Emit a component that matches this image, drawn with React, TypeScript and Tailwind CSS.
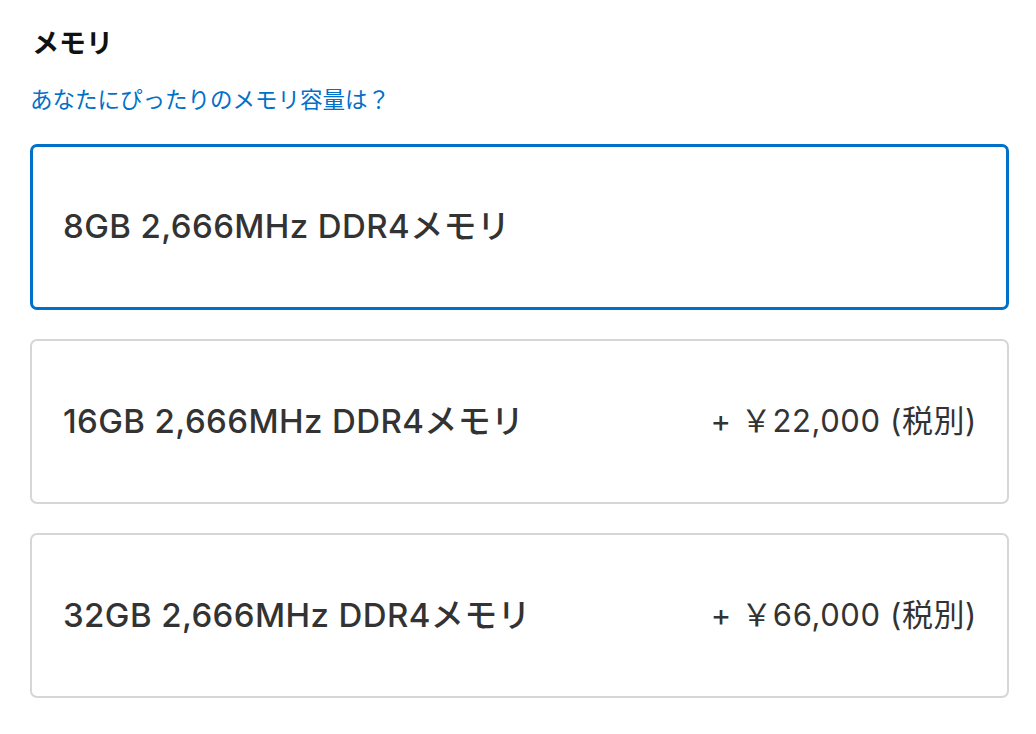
import React from "react";

const font = { fontFamily: 'Inter, "Noto Sans CJK JP", sans-serif' };

const options = [
  { label: "8GB 2,666MHz DDR4メモリ", price: "", selected: true },
  { label: "16GB 2,666MHz DDR4メモリ", price: "+ ￥22,000 (税別)", selected: false },
  { label: "32GB 2,666MHz DDR4メモリ", price: "+ ￥66,000 (税別)", selected: false },
];

export default function App() {
  return (
    <div className="w-[1036px] h-[734px] bg-white pl-[30px] pr-[27px] pt-[24px]" style={font}>
      <h2 className="text-[27px] leading-[40px] font-bold text-[#111111] pl-[2px]">メモリ</h2>
      <a className="block mt-[22px] text-[22.5px] leading-[28px] text-[#0070c9]">
        あなたにぴったりのメモリ容量は？
      </a>
      <div className="mt-[30px] flex flex-col gap-[29px]">
        {options.map((o) => (
          <div
            key={o.label}
            className={
              o.selected
                ? "h-[166px] rounded-[7px] border-[3px] border-[#0070c9] flex items-center justify-between pl-[30px] pr-[29px]"
                : "h-[165px] rounded-[7px] border-2 border-[#d6d6d6] flex items-center justify-between pl-[31px] pr-[30px]"
            }
          >
            <span className="text-[33px] font-medium text-[#333333] tracking-[0.4px]">{o.label}</span>
            {o.price && <span className="text-[31px] text-[#333333] tracking-[0.6px]">{o.price}</span>}
          </div>
        ))}
      </div>
    </div>
  );
}
